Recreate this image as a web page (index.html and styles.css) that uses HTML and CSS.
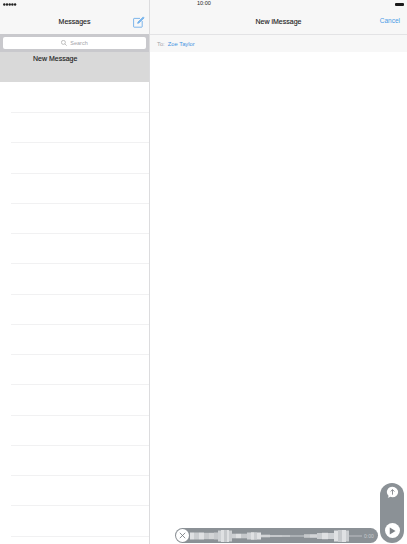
FILE: index.html
```html
<!DOCTYPE html>
<html lang="en">
<head>
<meta charset="utf-8">
<title>New iMessage</title>
<link rel="stylesheet" href="styles.css">
</head>
<body>
<div class="screen">
  <aside class="master">
    <div class="status status-left">
      <svg class="signal" width="14" height="3" viewBox="0 0 14 3"><g fill="#222"><circle cx="1.3" cy="1.5" r="1.2"/><circle cx="4" cy="1.5" r="1.2"/><circle cx="6.700" cy="1.5" r="1.2"/><circle cx="9.400" cy="1.5" r="1.2"/><circle cx="12.100" cy="1.5" r="1.2"/></g></svg>
    </div>
    <header class="nav">
      <span class="nav-title">Messages</span>
      <svg class="compose" width="12" height="12" viewBox="0 0 12 12" fill="none" stroke="#4a9be6" stroke-width=".7"><path d="M7 2.400H1.200a.6.6 0 0 0-.6.6v7.600a.6.6 0 0 0 .6.6h7.400a.6.6 0 0 0 .6-.6V5"/><path d="M4.600 7.400l.3-1.300L10.200.9l1 1-5.300 5.200z" fill="#7db8ee" stroke-width=".5"/></svg>
    </header>
    <div class="search-band">
      <div class="search">
        <svg width="6" height="6" viewBox="0 0 6 6" fill="none" stroke="#999" stroke-width=".6"><circle cx="2.400" cy="2.400" r="2"/><path d="M3.900 3.900l1.800 1.800"/></svg>
        <span>Search</span>
      </div>
    </div>
    <div class="selected"><span>New Message</span></div>
    <ul class="rows">
      <li></li><li></li><li></li><li></li><li></li><li></li><li></li><li></li><li></li><li></li><li></li><li></li><li></li><li></li><li></li><li></li>
    </ul>
  </aside>
  <main class="detail">
    <div class="status status-right">
      <span class="clock">10:00</span>
      <span class="battery"></span>
    </div>
    <header class="nav nav-detail">
      <span class="nav-title">New iMessage</span>
      <span class="cancel">Cancel</span>
    </header>
    <div class="to-row"><span class="to-label">To:</span><span class="to-name">Zoe Taylor</span></div>
    <div class="thread"></div>
  </main>

  <div class="recorder">
    <span class="close-btn">
      <svg width="7" height="7" viewBox="0 0 7 7" stroke="#6f7479" stroke-width=".8"><path d="M.8.8l5.400 5.400M6.200.8L.8 6.200"/></svg>
    </span>
    <svg class="wave" width="172" height="14" viewBox="0 0 172 14" fill="#dfe1e3">
      <rect x="0" y="3.500" width="4" height="7"/><rect x="4" y="3.500" width="5" height="7" opacity=".75"/><rect x="9" y="3.500" width="5" height="7"/><rect x="14" y="3.800" width="5" height="6.400" opacity=".7"/><rect x="19" y="3.800" width="5" height="6.400" opacity=".85"/><rect x="24" y="3.500" width="4" height="7" opacity=".7"/>
      <rect x="28" y="1.500" width="3" height="11" opacity=".8"/><rect x="31" y="1" width="3" height="12"/><rect x="34" y="1" width="3" height="12" opacity=".7"/><rect x="37" y="1" width="2" height="12"/><rect x="39" y="1.500" width="3" height="11" opacity=".75"/>
      <rect x="42" y="4.700" width="4" height="4.600" opacity=".8"/><rect x="46" y="4.700" width="5" height="4.600"/><rect x="51" y="4.700" width="6" height="4.600" opacity=".7"/>
      <rect x="57" y="3.500" width="4" height="7" opacity=".8"/><rect x="61" y="3.200" width="3" height="7.600"/><rect x="64" y="3.200" width="3" height="7.600" opacity=".75"/><rect x="67" y="3.500" width="4" height="7"/>
      <rect x="71" y="5.700" width="9" height="2.600" opacity=".85"/><rect x="80" y="6" width="12" height="2" opacity=".7"/><rect x="92" y="6.200" width="8" height="1.600" opacity=".8"/><rect x="100" y="6.500" width="14" height="1" opacity=".8"/>
      <rect x="114" y="5.200" width="6" height="3.600" opacity=".7"/><rect x="120" y="5.200" width="7" height="3.600" opacity=".85"/>
      <rect x="127" y="4" width="5" height="6" opacity=".75"/><rect x="132" y="3.800" width="6" height="6.400"/><rect x="138" y="4" width="6" height="6" opacity=".8"/>
      <rect x="144" y="1.500" width="4" height="11"/><rect x="148" y="1" width="4" height="12" opacity=".7"/><rect x="152" y="1" width="4" height="12"/><rect x="156" y="1.500" width="3" height="11" opacity=".75"/>
      <rect x="159" y="6.600" width="13" height=".8" opacity=".75"/>
    </svg>
    <span class="time">0:00</span>
  </div>

  <div class="actions">
    <span class="round-btn">
      <svg width="13" height="13" viewBox="0 0 15 15"><path d="M7.500 1a6.500 6 0 0 1 0 12c-.9 0-1.800-.2-2.600-.5-.9.8-2 1.200-3 1.200.7-.7 1-1.600 1-2.500A6.500 6 0 0 1 7.500 1z" fill="#fff"/><path d="M7.500 10V4.300M5.300 6.400l2.200-2.200 2.200 2.200" fill="none" stroke="#7c8186" stroke-width="1"/></svg>
    </span>
    <span class="round-btn round-btn-solid">
      <svg width="7" height="8" viewBox="0 0 9 10"><path d="M1 .6l7.400 4.400L1 9.400z" fill="#7c8186"/></svg>
    </span>
  </div>
</div>
</body>
</html>
```
FILE: styles.css
```css
* {
  box-sizing: border-box;
}

html,
body {
  margin: 0;
  padding: 0;
  height: 100%;
  overflow: hidden;
  background: #fff;
}

body {
  font-family: "Liberation Sans", Arial, sans-serif;
  color: #1c1c1c;
}

.screen {
  position: relative;
  display: flex;
  width: 407px;
  height: 544px;
  overflow: hidden;
}

.master {
  flex: 0 0 150px;
  display: flex;
  flex-direction: column;
  height: 544px;
  overflow: hidden;
  border-right: 1px solid #dcdcde;
}

.master > *,
.detail > * {
  flex-shrink: 0;
}

.detail {
  flex: 1;
  display: flex;
  flex-direction: column;
  height: 544px;
}

.status {
  height: 7px;
  padding-top: 1px;
  background: #f7f7f7;
  display: flex;
  align-items: center;
}

.status-left {
  padding-left: 3px;
}

.status-right {
  position: relative;
  justify-content: flex-end;
  padding-right: 3px;
}

.clock {
  position: absolute;
  left: 47px;
  top: 0;
  font-size: 5.500px;
  line-height: 7px;
  color: #222;
}

.battery {
  width: 9px;
  height: 3px;
  background: #1a1a1a;
  border-radius: 1px;
}

.nav {
  position: relative;
  height: 27px;
  padding-top: 1px;
  background: #f7f7f7;
  display: flex;
  align-items: center;
  justify-content: center;
}

.nav-detail {
  border-bottom: 1px solid #e3e3e5;
  height: 28px;
}

.nav-title {
  font-size: 7px;
  font-weight: 400;
  color: #1a1a1a;
  -webkit-text-stroke: .12px #1a1a1a;
}

.compose {
  position: absolute;
  left: 133px;
  top: 8.500px;
}

.cancel {
  position: absolute;
  right: 7px;
  top: 10px;
  font-size: 6.500px;
  line-height: 8px;
  color: #4a9be6;
}

.search-band {
  height: 18px;
  padding: 3px 3px 0;
  background: #c9c9cd;
}

.search {
  height: 11.500px;
  background: #fff;
  border-radius: 2px;
  display: flex;
  align-items: center;
  justify-content: center;
  gap: 3px;
  font-size: 5.500px;
  color: #a3a3a8;
}

.selected {
  height: 30px;
  padding: 3px 0 0 33px;
  background: #d9d9d9;
  font-size: 7px;
  line-height: 8px;
  color: #1a1a1a;
  -webkit-text-stroke: .12px #1a1a1a;
}

.rows {
  list-style: none;
  margin: 0;
  padding: .75px 0 0 11px;
}

.rows li {
  height: 30.250px;
  border-bottom: 1px solid #f1f1f2;
}

.to-row {
  height: 17px;
  padding: 0 0 0 7px;
  background: #f7f7f7;
  display: flex;
  align-items: center;
  gap: 3px;
  font-size: 5.800px;
}

.to-label {
  color: #a3a3a8;
}

.to-name {
  color: #3f92e2;
}

.thread {
  flex: 1;
  background: #fff;
}

.recorder {
  position: absolute;
  left: 175px;
  top: 528px;
  width: 203px;
  height: 15px;
  border-radius: 8px;
  background: #8b9196;
  display: flex;
  align-items: center;
  padding-left: 1px;
}

.close-btn {
  width: 13px;
  height: 13px;
  border-radius: 50%;
  background: #fff;
  display: flex;
  align-items: center;
  justify-content: center;
}

.wave {
  margin-left: 1px;
}

.time {
  margin-left: 2px;
  font-size: 5px;
  color: #c9ccce;
}

.actions {
  position: absolute;
  left: 380px;
  top: 483px;
  width: 24px;
  height: 60px;
  border-radius: 12px;
  background: #8b9196;
  display: flex;
  flex-direction: column;
  justify-content: space-between;
  align-items: center;
  padding: 2px 0 5px;
}

.round-btn {
  width: 15px;
  height: 15px;
  border-radius: 50%;
  display: flex;
  align-items: center;
  justify-content: center;
}

.round-btn-solid {
  background: #fff;
}
```
